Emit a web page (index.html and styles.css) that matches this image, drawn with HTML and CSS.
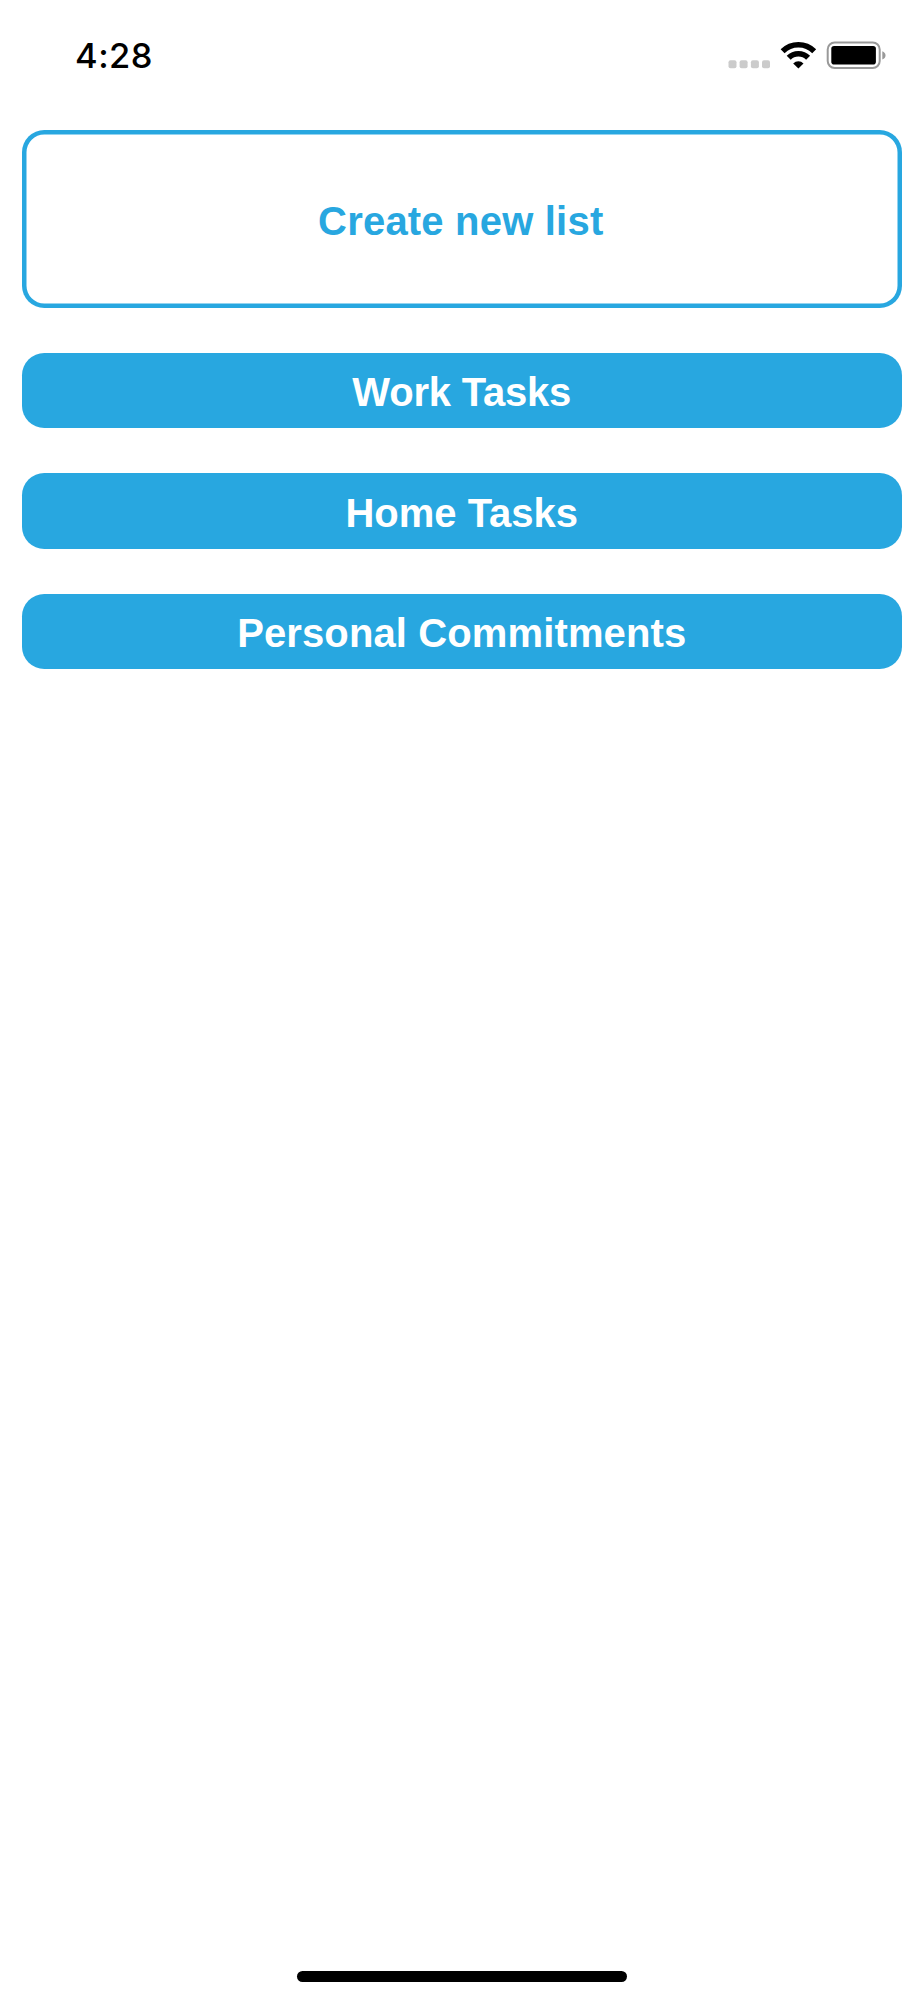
FILE: index.html
```html
<!DOCTYPE html>
<html lang="en">
<head>
<meta charset="utf-8">
<title>Lists</title>
<link rel="stylesheet" href="styles.css">
</head>
<body>
<div class="screen">
  <header class="status">
    <span class="time">4:28</span>
    <svg class="indicators" width="160" height="32" viewBox="728 40 160 32" aria-hidden="true">
      <g fill="#cbcbcb">
        <rect x="728.5" y="60.3" width="8" height="8" rx="2"/>
        <rect x="739.6" y="60.3" width="8" height="8" rx="2"/>
        <rect x="750.9" y="60.3" width="8" height="8" rx="2"/>
        <rect x="762" y="60.3" width="8" height="8" rx="2"/>
      </g>
      <g fill="none" stroke="#000" stroke-width="5.6">
        <path d="M782.6 51.2A22.5 22.5 0 0 1 814.2 51.2"/>
        <path d="M788.7 57.8A13.6 13.6 0 0 1 808.1 57.8"/>
      </g>
      <path d="M793.2 63.4A7.4 7.4 0 0 1 803.5 63.4L798.4 68.4Z"/>
      <rect x="827.7" y="42.5" width="52" height="25.6" rx="7" fill="none" stroke="#999" stroke-width="2"/>
      <rect x="831.3" y="46" width="44.6" height="18.6" rx="2.8"/>
      <path d="M882.3 51.2Q885.5 52.5 885.5 55.4T882.3 59.4Z" fill="#999"/>
    </svg>
  </header>
  <main class="lists">
    <button class="create">Create new list</button>
    <button class="list work">Work Tasks</button>
    <button class="list home">Home Tasks</button>
    <button class="list personal">Personal Commitments</button>
  </main>
  <div class="home-bar"></div>
</div>
</body>
</html>
```
FILE: styles.css
```css
* { box-sizing: border-box; }
body { margin: 0; background: #fff; }
.screen {
  width: 924px;
  height: 2000px;
  display: flex;
  flex-direction: column;
  align-items: center;
  background: #fff;
}
.status {
  width: 100%;
  height: 129.5px;
  padding: 40px 36px 0 75px;
  display: flex;
  justify-content: space-between;
  align-items: flex-start;
}
.time {
  font: 550 34.5px/32px Inter, sans-serif;
  letter-spacing: 0.5px;
  color: #000;
}
.indicators { display: block; }
.lists {
  width: 100%;
  padding: 0 22.5px 0 22px;
  display: flex;
  flex-direction: column;
  gap: 44.6px;
  flex: 1;
}
.create, .list {
  margin: 0;
  padding: 3px 0 0;
  border: 0;
  border-radius: 22.3px;
  font: bold 40px/46px "Liberation Sans", Arial, sans-serif;
  text-align: center;
}
.create {
  height: 178.5px;
  padding: 4px 2px 0 0;
  background: transparent;
  box-shadow: inset 0 0 0 4.5px #28a7e0;
  color: #28a7e0;
  letter-spacing: 0.2px;
}
.list {
  height: 75.9px;
  background: #28a7e0;
  color: #fff;
}
.work { letter-spacing: -0.2px; }
.personal { letter-spacing: 0.12px; }
.home-bar {
  width: 330px;
  height: 11px;
  margin-bottom: 18px;
  border-radius: 6px;
  background: #000;
}
```
